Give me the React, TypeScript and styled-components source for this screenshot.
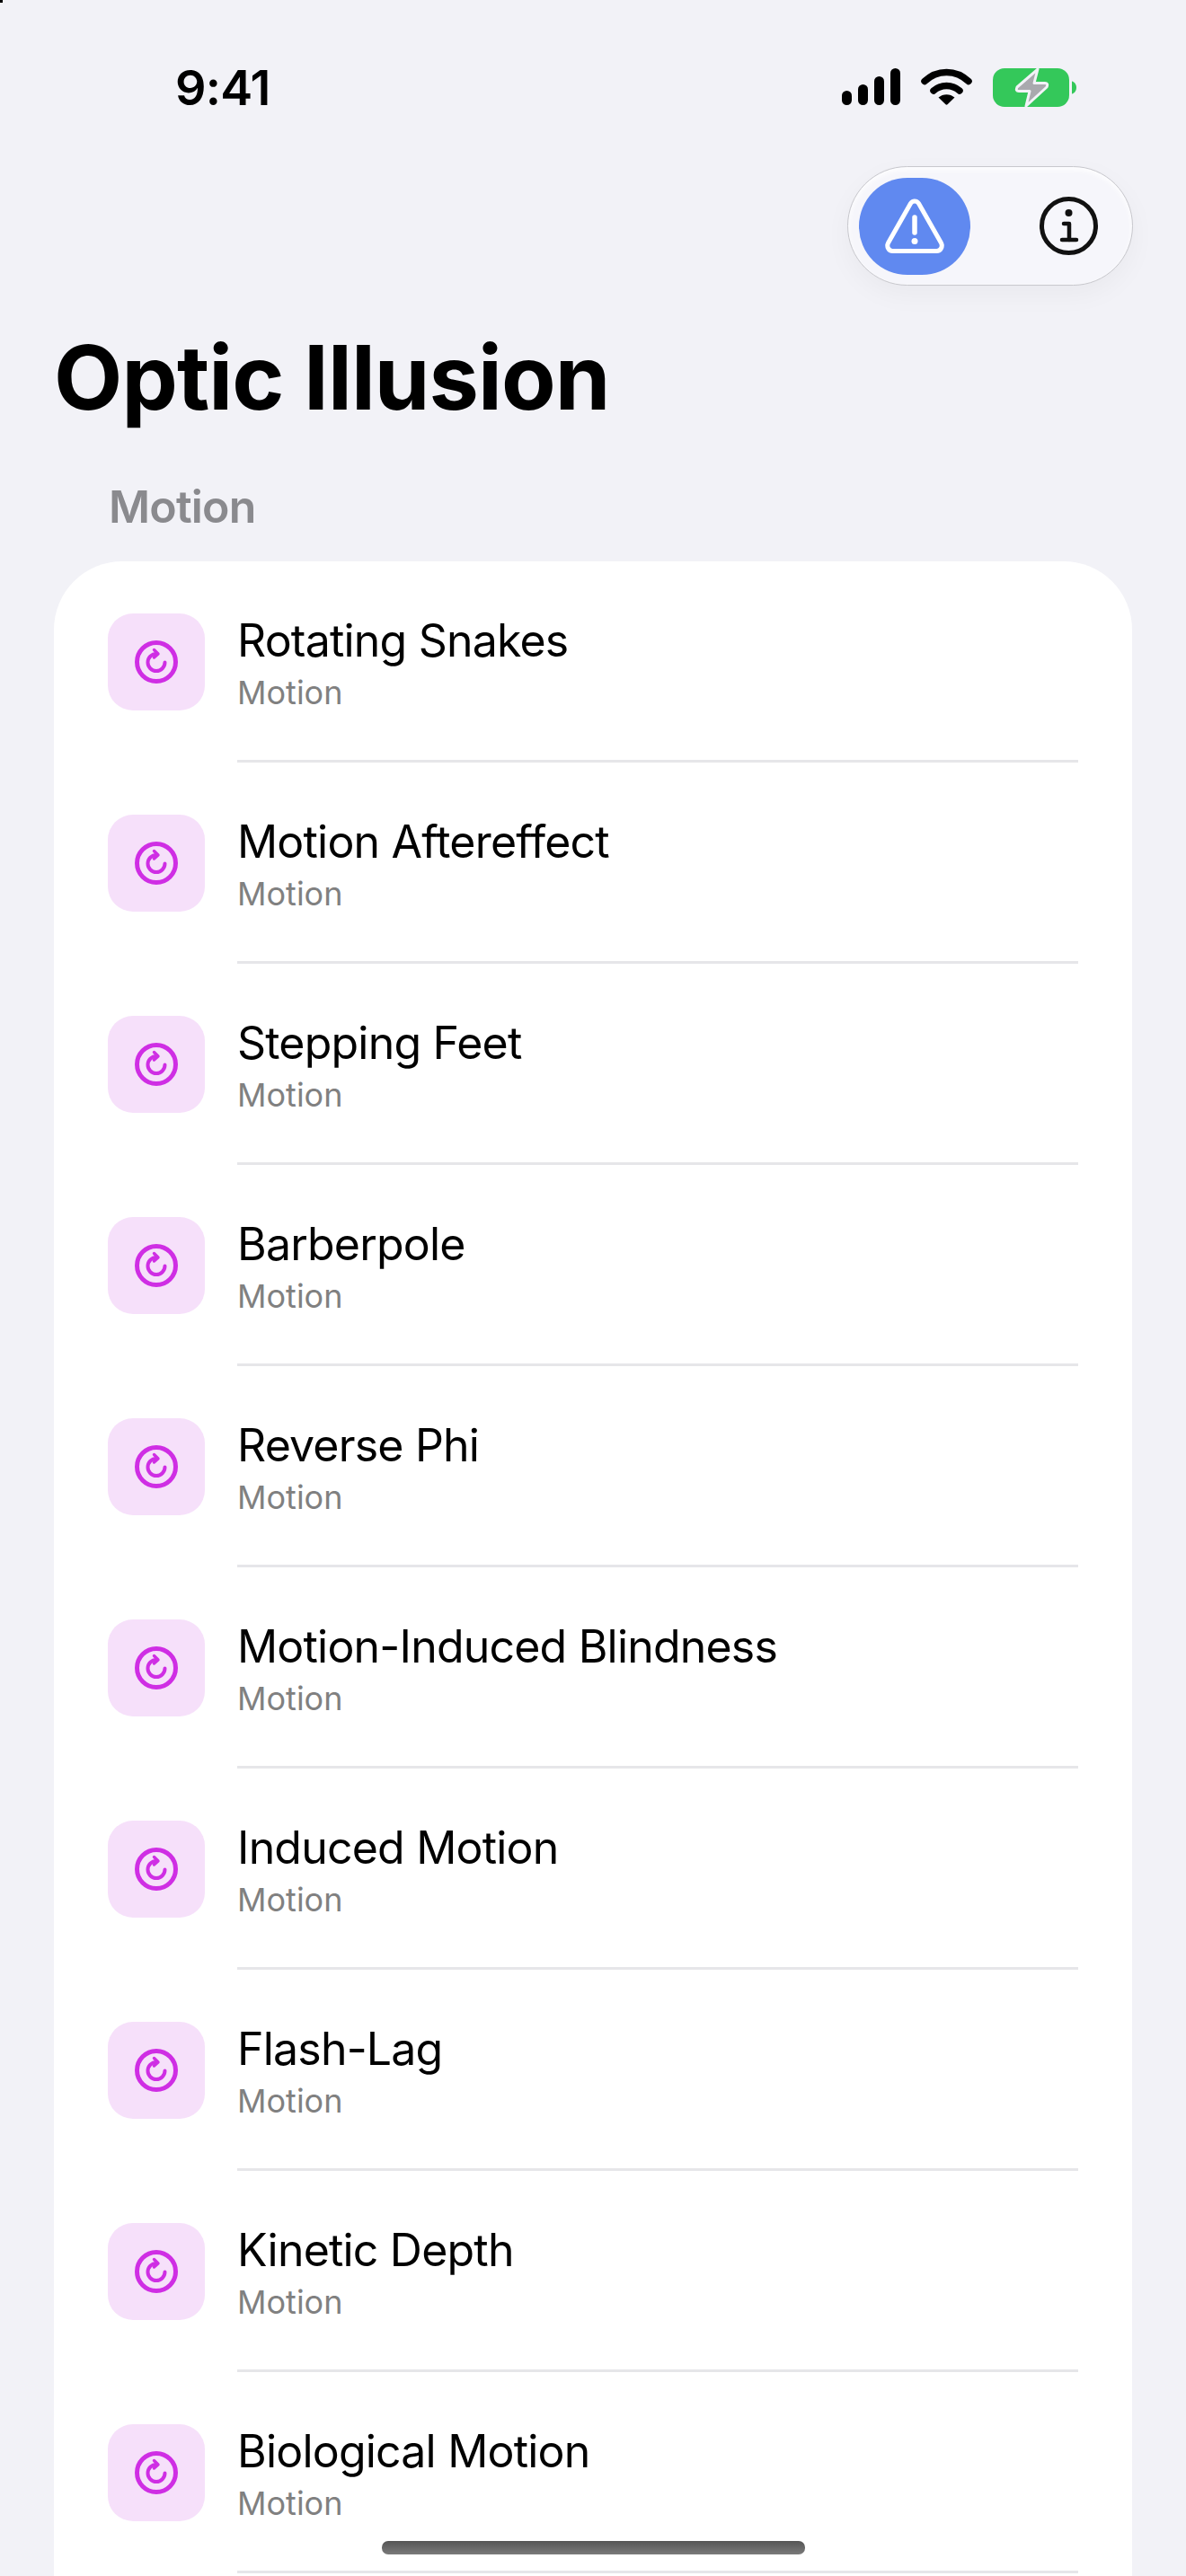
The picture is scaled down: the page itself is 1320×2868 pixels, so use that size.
import styled, { createGlobalStyle } from 'styled-components';

const GlobalStyle = createGlobalStyle`
  html, body {
    margin: 0;
    padding: 0;
    background: #f2f2f7;
  }
  * {
    box-sizing: border-box;
  }
`;

const Screen = styled.div`
  position: relative;
  width: 1320px;
  height: 2868px;
  overflow: hidden;
  background: #f2f2f7;
  font-family: Inter, "Noto Sans", sans-serif;
  color: #000;
`;

const CornerSpeck = styled.div`
  position: absolute;
  left: 0;
  top: 0;
  width: 3px;
  height: 3px;
  background: #000;
`;

const StatusBar = styled.div`
  height: 185px;
  padding: 76px 122px 0 195px;
  display: flex;
  justify-content: space-between;
  align-items: flex-start;
`;

const Time = styled.span`
  font-size: 54px;
  line-height: 43px;
  font-weight: 600;
  letter-spacing: -0.8px;
`;

const StatusIcons = styled.div`
  display: flex;
  align-items: flex-start;
  gap: 23px;
`;

const Toolbar = styled.div`
  display: flex;
  justify-content: flex-end;
  padding-right: 59px;
`;

const ButtonPill = styled.div`
  width: 318px;
  height: 133px;
  padding: 11.5px;
  display: flex;
  align-items: center;
  justify-content: space-between;
  border-radius: 67px;
  border: 1.5px solid #c8c8cd;
  background: #f6f6fb;
  box-shadow: inset 0 3px 6px rgba(255, 255, 255, 0.9), 0 10px 30px rgba(0, 0, 0, 0.04);
`;

const ActiveButton = styled.div`
  width: 124px;
  height: 108px;
  display: flex;
  align-items: center;
  justify-content: center;
  border-radius: 54px;
  background: #6089f0;
`;

const PlainButton = styled.div`
  width: 65px;
  height: 65px;
  margin-right: 27px;
  display: flex;
`;

const Title = styled.h1`
  margin: 44px 0 0 60px;
  font-size: 99px;
  line-height: 116px;
  font-weight: 700;
  letter-spacing: -0.9px;
`;

const SectionLabel = styled.div`
  margin: 54px 0 0 121px;
  height: 93px;
  font-size: 50px;
  line-height: 64px;
  font-weight: 600;
  letter-spacing: -0.8px;
  color: #8a8a8e;
`;

const Card = styled.div`
  margin: 0 60px;
  padding-bottom: 60px;
  border-radius: 76px 76px 0 0;
  background: #fff;
`;

const Row = styled.div`
  height: 224px;
  padding-left: 60px;
  display: flex;
  align-items: center;
  gap: 36px;
`;

const IconTile = styled.div`
  flex: none;
  width: 108px;
  height: 108px;
  display: flex;
  align-items: center;
  justify-content: center;
  border-radius: 28px;
  background: #f6e0fa;
`;

const RowBody = styled.div`
  align-self: stretch;
  flex: 1;
  margin-right: 60px;
  border-bottom: 3px solid #e6e6e9;
  padding-top: 58px;
`;

const RowTitle = styled.div`
  font-size: 50px;
  line-height: 60px;
  font-weight: 400;
  letter-spacing: -0.8px;
`;

const RowSubtitle = styled.div`
  margin-top: 6px;
  font-size: 36px;
  line-height: 44px;
  font-weight: 400;
  color: #808080;
`;

const HomeBar = styled.div`
  position: absolute;
  left: 425px;
  top: 2829px;
  width: 471px;
  height: 15px;
  border-radius: 7px;
  background: linear-gradient(#555, #7a7a7a);
`;

const items = [
  'Rotating Snakes',
  'Motion Aftereffect',
  'Stepping Feet',
  'Barberpole',
  'Reverse Phi',
  'Motion-Induced Blindness',
  'Induced Motion',
  'Flash-Lag',
  'Kinetic Depth',
  'Biological Motion',
];

function SignalIcon() {
  return (
    <svg width="65" height="41" viewBox="0 0 65 41" fill="#000">
      <rect x="0" y="25" width="11" height="16" rx="5.5" />
      <rect x="18" y="18" width="11" height="23" rx="5.5" />
      <rect x="36" y="9" width="11" height="32" rx="5.5" />
      <rect x="54" y="0" width="11" height="41" rx="5.5" />
    </svg>
  );
}

function WifiIcon() {
  return (
    <svg width="57" height="41" viewBox="0 0 57 41" fill="none">
      <path d="M4 14.5C18 1 39 1 53 14.5" stroke="#000" strokeWidth="7.5" strokeLinecap="round" />
      <path d="M14 25C22 17.5 35 17.5 43 25" stroke="#000" strokeWidth="7.5" strokeLinecap="round" />
      <path d="M19.5 32.5C24.5 28 32.5 28 37.5 32.5L29.5 40.2C28.9 40.8 28.1 40.8 27.5 40.2Z" fill="#000" />
    </svg>
  );
}

function BatteryIcon() {
  return (
    <svg width="93" height="43" viewBox="0 0 93 43">
      <rect x="0" y="0" width="85" height="43" rx="13" fill="#34c85a" />
      <path d="M88 14.5C91 15.2 93 18 93 21.5C93 25 91 27.8 88 28.5Z" fill="#34c85a" />
      <path
        d="M50 1L27 21Q25 25.5 29 25.5H41L37 42L60 21Q62 16.5 58 16.5H46Z"
        fill="#a9a9ae"
        stroke="#f2f2f7"
        strokeWidth="3"
        strokeLinejoin="round"
      />
    </svg>
  );
}

function WarningIcon() {
  return (
    <svg width="68" height="62" viewBox="0 0 68 62" fill="none" stroke="#fff" strokeWidth="5" strokeLinecap="round" strokeLinejoin="round">
      <path d="M29.5 5.5C31.5 2 36.5 2 38.5 5.5L63.5 49.5C65.5 53.5 63 58.5 58.5 58.5H9.5C5 58.5 2.5 53.5 4.5 49.5Z" />
      <path d="M34 21V38" strokeWidth="5.5" />
      <circle cx="34" cy="47.5" r="3.5" fill="#fff" stroke="none" />
    </svg>
  );
}

function InfoIcon() {
  return (
    <svg width="65" height="65" viewBox="0 0 65 65" fill="none" stroke="#111" strokeLinecap="round" strokeLinejoin="round">
      <circle cx="32.5" cy="32.5" r="30" strokeWidth="5" />
      <circle cx="32.5" cy="18" r="4" fill="#111" stroke="none" />
      <path d="M27 30H33V48" strokeWidth="4.5" />
      <path d="M25 48H41" strokeWidth="4.5" />
    </svg>
  );
}

function MotionIcon() {
  return (
    <svg width="48" height="48" viewBox="0 0 48 48" fill="none" stroke="#cf2ee4" strokeLinecap="round" strokeLinejoin="round">
      <circle cx="24" cy="24" r="21.5" strokeWidth="5" />
      <path d="M24 15A9.5 9.5 0 1 0 33.5 24.5" strokeWidth="4" />
      <path d="M21.5 10.5L26 15L21.5 19" strokeWidth="3.4" />
    </svg>
  );
}

export default function App() {
  return (
    <Screen>
      <GlobalStyle />
      <CornerSpeck />
      <StatusBar>
        <Time>9:41</Time>
        <StatusIcons>
          <SignalIcon />
          <WifiIcon />
          <BatteryIcon />
        </StatusIcons>
      </StatusBar>
      <Toolbar>
        <ButtonPill>
          <ActiveButton>
            <WarningIcon />
          </ActiveButton>
          <PlainButton>
            <InfoIcon />
          </PlainButton>
        </ButtonPill>
      </Toolbar>
      <Title>Optic Illusion</Title>
      <SectionLabel>Motion</SectionLabel>
      <Card>
        {items.map(name => (
          <Row key={name}>
            <IconTile>
              <MotionIcon />
            </IconTile>
            <RowBody>
              <RowTitle>{name}</RowTitle>
              <RowSubtitle>Motion</RowSubtitle>
            </RowBody>
          </Row>
        ))}
      </Card>
      <HomeBar />
    </Screen>
  );
}
